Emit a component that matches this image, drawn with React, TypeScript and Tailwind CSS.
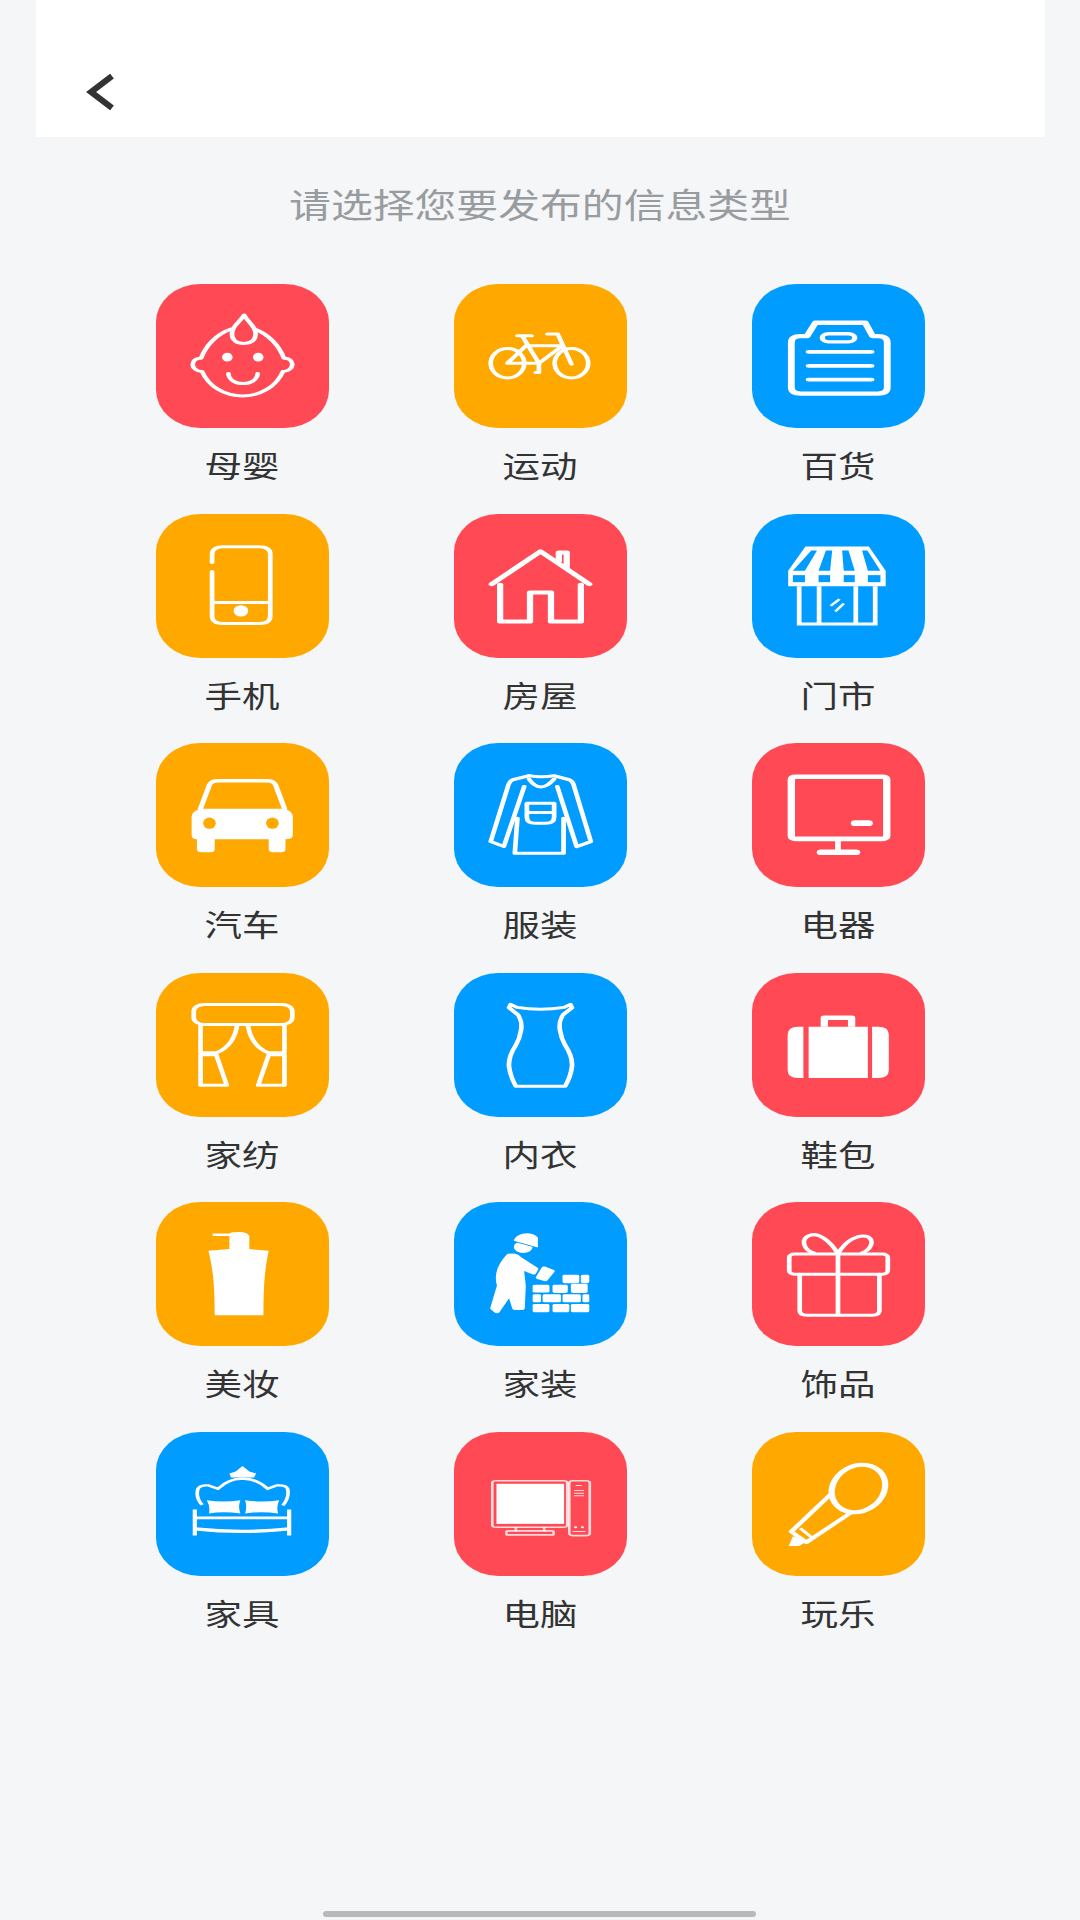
import type { ReactNode } from 'react';

const RED = 'bg-[#ff4a55]';
const ORANGE = 'bg-[#ffa800]';
const BLUE = 'bg-[#009cff]';

// icons are drawn in a 330x431 box that gets squashed onto the 173x144 tile, same as the source art
function Baby() {
  return (
    <g fill="none" stroke="#fff" strokeWidth="9" strokeLinecap="round" strokeLinejoin="round">
      <path d="M168 93C160 115 145 125 145 150C145 170 155 178 167 178C180 178 190 170 190 150C190 125 175 115 168 93Z" />
      <path d="M143 135C115 150 95 185 86 222C76 222 70 230 70 241C70 252 78 262 88 262C100 305 130 335 165 335C200 335 230 305 242 262C252 262 260 252 260 241C260 230 254 222 244 222C235 185 215 150 188 135" />
      <ellipse cx="136" cy="219" rx="10" ry="13" fill="#fff" stroke="none" />
      <ellipse cx="195" cy="219" rx="10" ry="13" fill="#fff" stroke="none" />
      <path d="M138 268C140 308 192 308 194 268" />
    </g>
  );
}

function Bike() {
  return (
    <g fill="none" stroke="#fff" strokeWidth="9" strokeLinecap="round" strokeLinejoin="round">
      <ellipse cx="102" cy="237" rx="32" ry="44" />
      <ellipse cx="224" cy="237" rx="32" ry="44" />
      <path d="M121 155H148M130 155L162 237M102 237H162L207 185H137L102 237M178 150H198L224 240M162 237V265H156" />
    </g>
  );
}

function Bag() {
  return (
    <g fill="none" stroke="#fff" strokeLinecap="round" strokeLinejoin="round">
      <path strokeWidth="13" d="M121 116H216L230 156H240Q258 156 258 175V310Q258 328 240 328H93Q75 328 75 310V175Q75 156 93 156H105Z" />
      <rect x="134" y="149" width="62" height="24" rx="12" strokeWidth="10" />
      <path strokeWidth="11" d="M108 203H228M108 245H228M108 286H228" />
    </g>
  );
}

function Phone() {
  return (
    <g fill="none" stroke="#fff" strokeWidth="9" strokeLinecap="round">
      <path d="M107 145V120Q107 98 130 98H195Q218 98 218 120V305Q218 328 195 328H130Q107 328 107 305V172M107 265H218" />
      <ellipse cx="162" cy="290" rx="14" ry="17" fill="#fff" stroke="none" />
    </g>
  );
}

function House() {
  return (
    <g fill="none" stroke="#fff" strokeWidth="12" strokeLinecap="round" strokeLinejoin="round">
      <path d="M72 210L165 112L258 210M200 140V115H215V158" />
      <path d="M88 212V322H145V235H185V322H242V212" />
    </g>
  );
}

function Store() {
  return (
    <g>
      <path fill="#fff" d="M102 97H223L255 170V216H69V170Z" />
      <g fill="#009cff">
        <path d="M113 109H124L101 170H78Z" />
        <path d="M141 109H153L149 170H127Z" />
        <path d="M172 109H184L196 170H175Z" />
        <path d="M210 109H220L245 170H221Z" />
        <rect x="78" y="183" width="23" height="21" />
        <rect x="127" y="183" width="22" height="21" />
        <rect x="175" y="183" width="21" height="21" />
        <rect x="221" y="183" width="24" height="21" />
      </g>
      <path fill="none" stroke="#fff" strokeWidth="9" d="M90 216V329H235V216M128 216V329M198 216V329" />
      <path fill="none" stroke="#fff" strokeWidth="6" d="M150 275L167 255M159 292L175 268" />
    </g>
  );
}

function Car() {
  return (
    <g>
      <path fill="none" stroke="#fff" strokeWidth="10" d="M84 200L102 125Q106 113 118 113H212Q224 113 228 125L246 200" />
      <path fill="#fff" d="M85 197H245Q261 205 261 220V275Q261 288 247 288V318Q247 327 238 327H224Q215 327 215 318V288H112V318Q112 327 104 327H88Q78 327 78 318V288Q68 288 68 275V220Q68 205 85 197Z" />
      <ellipse cx="102" cy="240" rx="12" ry="17" fill="#ffa800" />
      <ellipse cx="222" cy="240" rx="12" ry="17" fill="#ffa800" />
    </g>
  );
}

function Coat() {
  return (
    <g fill="none" stroke="#fff" strokeWidth="9" strokeLinejoin="round" strokeLinecap="round">
      <path d="M143 98Q167 104 191 98L220 110Q226 114 228 124L261 295L234 310L197 130" />
      <path d="M143 98L112 110Q106 114 104 124L70 295L95 310L134 130" />
      <path d="M121 225L116 330H209L209 225" />
      <path d="M143 108Q165 155 191 108" />
      <path d="M139 180H191V222Q191 240 175 240H155Q139 240 139 222ZM139 208H191" />
    </g>
  );
}

function Tv() {
  return (
    <g fill="none" stroke="#fff" strokeLinecap="round" strokeLinejoin="round">
      <rect x="75" y="101" width="182" height="186" rx="8" strokeWidth="14" />
      <path strokeWidth="17" d="M197 240H222" />
      <path strokeWidth="11" d="M164 290V325" />
      <path strokeWidth="17" d="M132 327H198" />
    </g>
  );
}

function Curtain() {
  return (
    <g fill="none" stroke="#fff" strokeWidth="9" strokeLinejoin="round" strokeLinecap="round">
      <rect x="72" y="94" width="188" height="60" rx="20" />
      <path d="M85 154V239H115C140 225 152 190 155 154" />
      <path d="M245 154V239H215C190 225 178 190 175 154" />
      <path d="M85 245H115L135 336H85Z" />
      <path d="M245 245H215L195 336H245Z" />
    </g>
  );
}

function Dress() {
  return (
    <g fill="none" stroke="#fff" strokeWidth="9" strokeLinejoin="round" strokeLinecap="round">
      <path d="M108 94L120 103Q165 114 210 103L222 94L225 104L208 125C202 140 200 150 202 170C204 190 206 200 212 216C222 240 226 262 225 280C223 305 217 325 212 339H118C113 325 107 305 105 280C104 262 108 240 118 216C124 200 126 190 128 170C130 150 128 140 122 125L105 104Z" />
    </g>
  );
}

function Suitcase() {
  return (
    <g>
      <path fill="#fff" d="M108 161H221V314H108ZM98 161V314H88Q68 314 68 290V185Q68 161 88 161ZM229 161H241Q261 161 261 185V290Q261 314 241 314H229Z" />
      <path fill="none" stroke="#fff" strokeWidth="14" strokeLinejoin="round" d="M138 161V134H190V161" />
    </g>
  );
}

function Pump() {
  return (
    <path
      fill="#fff"
      d="M100 146L140 141V102H108V94H140Q145 90 158 90Q175 90 178 102V141L215 146C208 200 205 240 205 339H112C112 240 108 200 100 146Z"
    />
  );
}

const BRICKS = [
  [207, 218, 32, 25], [242, 218, 16, 25],
  [150, 248, 32, 23], [188, 248, 29, 24], [223, 245, 32, 27],
  [150, 276, 16, 24], [169, 276, 35, 24], [207, 276, 35, 24], [245, 276, 13, 24],
  [150, 305, 32, 25], [188, 305, 32, 25], [223, 305, 35, 25],
];

function Worker() {
  return (
    <g fill="#fff">
      <ellipse cx="132" cy="135" rx="18" ry="18" />
      <path d="M114 116C116 96 145 82 160 106V136Z" stroke="#009cff" strokeWidth="5" paintOrder="stroke" />
      <g stroke="#fff" strokeWidth="10" strokeLinejoin="round">
        <path d="M105 160Q118 156 124 168L156 200L152 212L128 197L132 250L130 318H116L107 272L82 328L74 318L87 250Q78 205 105 160Z" />
        <path d="M172 198L187 207L174 232L161 226Z" />
      </g>
      {BRICKS.map(([x, y, w, h]) => (
        <rect key={`${x}-${y}`} x={x} y={y} width={w} height={h} rx="4" />
      ))}
    </g>
  );
}

function Gift() {
  return (
    <g fill="none" stroke="#fff" strokeWidth="9" strokeLinejoin="round" strokeLinecap="round">
      <rect x="71" y="156" width="188" height="60" rx="10" />
      <path d="M91 216V325Q91 339 105 339H229Q243 339 243 325V216M164 156V339" />
      <path d="M164 156C150 115 125 90 110 100C90 112 100 145 118 152" />
      <path d="M164 156C178 115 205 93 222 105C235 118 225 145 210 152" />
    </g>
  );
}

function Bed() {
  return (
    <g>
      <path fill="#fff" d="M165 102L178 118L191 124L187 136H143L140 124L152 118Z" />
      <path
        fill="none"
        stroke="#fff"
        strokeWidth="7"
        d="M88 218Q75 195 80 170Q84 158 100 160L118 170Q140 138 165 140Q190 138 213 170L230 160Q248 158 251 170Q255 195 242 220"
      />
      <path fill="#fff" d="M97 204Q128 212 161 204Q156 224 161 244Q128 236 101 244Q104 224 97 204ZM170 204Q200 212 235 204Q229 224 233 244Q200 236 170 244Q174 224 170 204Z" />
      <path fill="none" stroke="#fff" strokeWidth="8" d="M74 232V310M254 232V310M74 257H254" />
      <path fill="none" stroke="#fff" strokeWidth="10" d="M74 290Q165 305 254 290" />
    </g>
  );
}

function Computer() {
  return (
    <g fill="none" stroke="#ffffffcc" strokeWidth="5">
      <rect x="73" y="146" width="143" height="139" rx="6" />
      <rect x="81" y="155" width="129" height="120" fill="#fff" stroke="none" />
      <path d="M118 285V298M172 285V298" />
      <rect x="100" y="296" width="90" height="12" rx="3" />
      <rect x="220" y="146" width="39" height="164" rx="6" />
      <path strokeWidth="3" d="M232 160H244M229 175H248M229 183H248M229 191H248M226 298H251" />
      <circle cx="232" cy="285" r="3" fill="#fff" stroke="none" />
      <circle cx="245" cy="285" r="3" fill="#fff" stroke="none" />
    </g>
  );
}

function Mic() {
  return (
    <g>
      <ellipse cx="203" cy="169" rx="50" ry="72" transform="rotate(12 203 169)" fill="none" stroke="#fff" strokeWidth="12" />
      <path fill="none" stroke="#fff" strokeWidth="10" strokeLinejoin="round" d="M153 182L75 298L104 330L190 240" />
      <path fill="#fff" d="M78 312L70 341H90L104 328Z" />
      <path fill="none" stroke="#fff" strokeWidth="7" d="M92 288L116 318" />
    </g>
  );
}

const ITEMS: { label: string; color: string; icon: ReactNode }[] = [
  { label: '母婴', color: RED, icon: <Baby /> },
  { label: '运动', color: ORANGE, icon: <Bike /> },
  { label: '百货', color: BLUE, icon: <Bag /> },
  { label: '手机', color: ORANGE, icon: <Phone /> },
  { label: '房屋', color: RED, icon: <House /> },
  { label: '门市', color: BLUE, icon: <Store /> },
  { label: '汽车', color: ORANGE, icon: <Car /> },
  { label: '服装', color: BLUE, icon: <Coat /> },
  { label: '电器', color: RED, icon: <Tv /> },
  { label: '家纺', color: ORANGE, icon: <Curtain /> },
  { label: '内衣', color: BLUE, icon: <Dress /> },
  { label: '鞋包', color: RED, icon: <Suitcase /> },
  { label: '美妆', color: ORANGE, icon: <Pump /> },
  { label: '家装', color: BLUE, icon: <Worker /> },
  { label: '饰品', color: RED, icon: <Gift /> },
  { label: '家具', color: BLUE, icon: <Bed /> },
  { label: '电脑', color: RED, icon: <Computer /> },
  { label: '玩乐', color: ORANGE, icon: <Mic /> },
];

export default function App() {
  return (
    <div className="flex h-[1920px] w-[1080px] flex-col overflow-hidden bg-[#f4f6f8] font-['Noto_Sans_CJK_SC',sans-serif]">
      <header className="mx-9 flex h-[137px] w-[1009px] items-end bg-white pb-[27px] pl-[50px]">
        <svg width="28" height="36" viewBox="0 0 28 36" fill="none">
          <path d="M26 2L5 18L26 34" stroke="#333" strokeWidth="6" />
        </svg>
      </header>

      <div className="flex h-[133px] items-center justify-center">
        <p className="scale-x-[1.23] text-[34px] leading-none text-[#999c9f]">请选择您要发布的信息类型</p>
      </div>

      <div className="mt-[14px] grid auto-rows-[229.5px] grid-cols-[298px_298px_298px] justify-center">
        {ITEMS.map((item) => (
          <div key={item.label} className="flex flex-col items-center">
            <div className={`h-[144px] w-[173px] shrink-0 overflow-hidden rounded-[44px/38px] ${item.color}`}>
              <svg viewBox="0 0 330 431" preserveAspectRatio="none" className="block h-full w-full">
                {item.icon}
              </svg>
            </div>
            <p className="mt-[20px] scale-x-125 text-[30px] leading-[32px] text-[#333]">{item.label}</p>
          </div>
        ))}
      </div>

      <div className="mt-auto mb-[3px] ml-[323px] h-[6px] w-[433px] rounded-full bg-[#b8b9bb]" />
    </div>
  );
}
